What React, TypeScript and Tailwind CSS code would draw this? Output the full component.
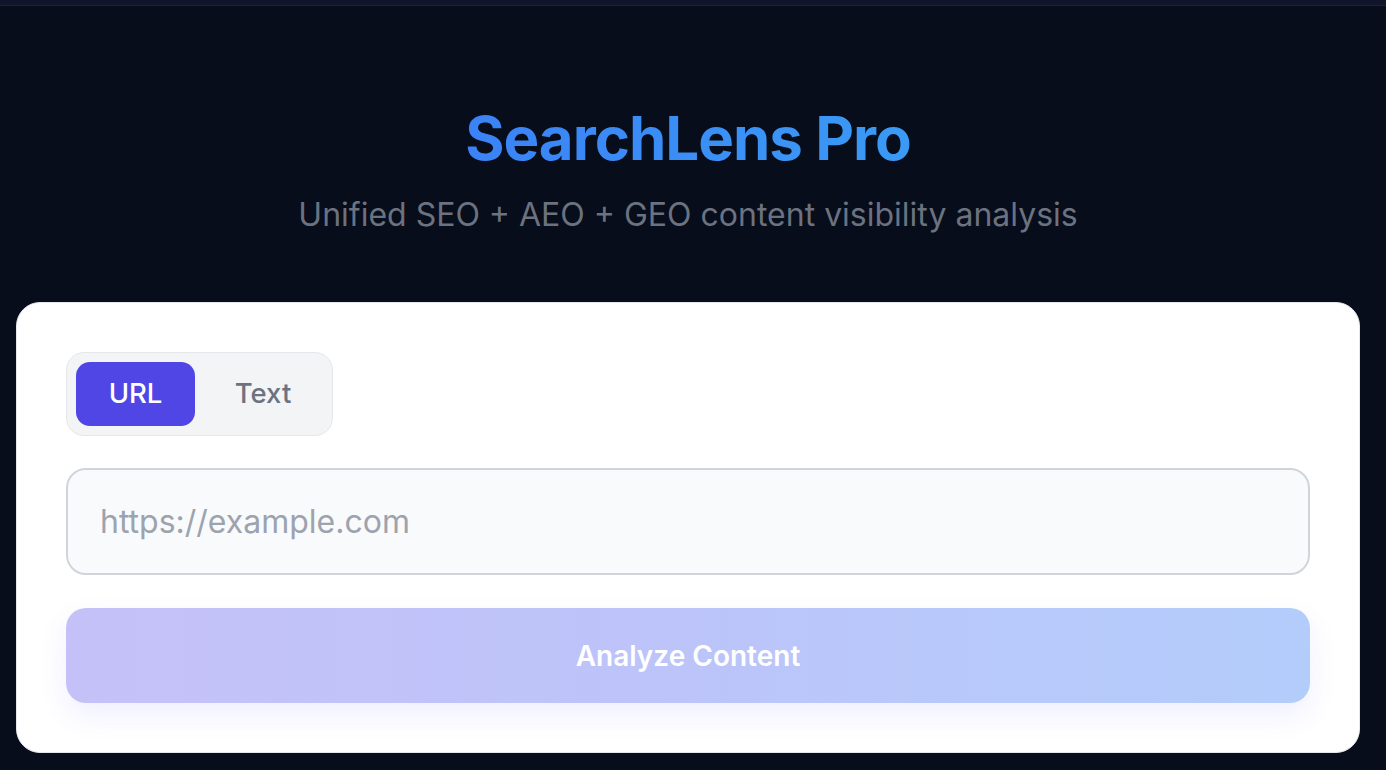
import React, { useState } from 'react';

const font = { fontFamily: 'Inter, "Noto Sans", sans-serif' };

const ModeTabs = ({
    mode,
    onChange,
}: {
    mode: 'url' | 'text';
    onChange: (m: 'url' | 'text') => void;
}) => {
    return (
        <div className="inline-flex p-[9px] rounded-[18px] bg-[#f3f4f6] border border-[#e5e7eb]">
            <button
                onClick={() => onChange('url')}
                className={
                    mode === 'url'
                        ? 'w-[119px] h-[64px] rounded-[14px] bg-[#4f46e5] text-white text-[27.5px] font-medium'
                        : 'w-[119px] h-[64px] rounded-[14px] text-[#6b7280] text-[27.5px] font-medium'
                }
            >
                URL
            </button>
            <button
                onClick={() => onChange('text')}
                className={
                    mode === 'text'
                        ? 'w-[128px] h-[64px] pl-[8px] rounded-[14px] bg-[#4f46e5] text-white text-[27.5px] font-medium'
                        : 'w-[128px] h-[64px] pl-[8px] rounded-[14px] text-[#6b7280] text-[27.5px] font-medium'
                }
            >
                Text
            </button>
        </div>
    );
};

export default function App() {
    const [mode, setMode] = useState<'url' | 'text'>('url');
    const [value, setValue] = useState('');

    return (
        <div className="min-h-screen bg-[#070d1a]" style={font}>
            {/* header strip */}
            <div className="h-[6px] bg-[#10152c] border-b border-[#1c2140]" />

            <div className="w-[1376px] px-4">
                <div className="flex flex-col items-center pt-[96px]">
                    <h1 className="text-[60px] leading-[72px] font-bold tracking-[-1px] bg-gradient-to-r from-[#3b82f6] to-[#3a9af5] bg-clip-text text-transparent">
                        SearchLens Pro
                    </h1>
                    <p className="mt-[22px] text-[32px] leading-[38px] text-[#6b7280]">
                        Unified SEO + AEO + GEO content visibility analysis
                    </p>
                </div>

                <div className="mt-[68px] rounded-[24px] bg-white border border-[#e5e7eb] p-[49px]">
                    <ModeTabs mode={mode} onChange={setMode} />

                    <input
                        value={value}
                        onChange={(e) => setValue(e.target.value)}
                        placeholder="https://example.com"
                        className="mt-[32px] block w-full h-[107px] rounded-[20px] bg-[#f9fafb] border-2 border-[#d1d5db] px-[32px] text-[32px] text-[#111827] placeholder:text-[#9ca3af] outline-none"
                    />

                    <button
                        disabled={!value}
                        className="mt-[33px] w-full h-[95px] rounded-[20px] bg-gradient-to-r from-[#c5c1f8] via-[#bcc4f9] to-[#b3cdfb] text-white text-[28px] font-semibold shadow-[0_12px_28px_rgba(99,102,241,0.10)]"
                    >
                        Analyze Content
                    </button>
                </div>
            </div>
        </div>
    );
}
